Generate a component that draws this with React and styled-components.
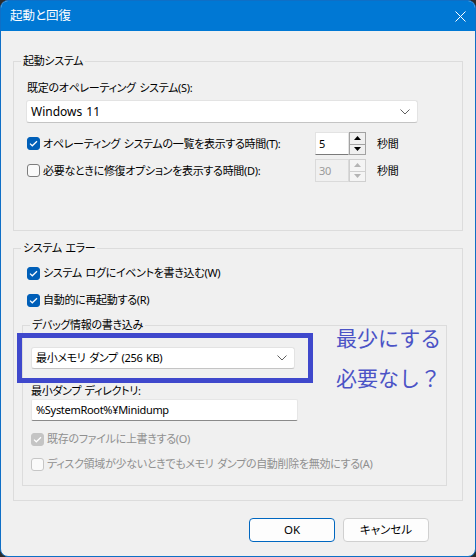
import styled, { createGlobalStyle } from 'styled-components';

const Global = createGlobalStyle`
    html, body {
        margin: 0;
        padding: 0;
        background: #2b2b2b;
    }
    body {
        font-family: "Noto Sans", "Noto Sans CJK JP", sans-serif;
        font-size: 11px;
        letter-spacing: -0.3px;
        word-spacing: 1px;
        font-feature-settings: "palt";
        color: #000;
    }`

const Window = styled.div`
    position: relative;
    width: 476px;
    height: 557px;
    box-sizing: border-box;
    border: 1px solid #0f6fc6;
    border-radius: 8px;
    overflow: hidden;
    background: #f0f0f0;
    display: flex;
    flex-direction: column;`

const TitleBar = styled.div`
    height: 30px;
    flex-shrink: 0;
    background: #0078d4;
    color: #fff;
    display: flex;
    align-items: center;
    justify-content: space-between;
    padding: 0 9px 0 9px;
    font-size: 12.5px;
    letter-spacing: 0;
    line-height: 16px;`

const Body = styled.div`
    flex: 1;
    padding: 22px 12px 0 12px;
    display: flex;
    flex-direction: column;`

const Group = styled.fieldset`
    margin: ${p => p.$margin || '0'};
    padding: 0;
    border: 1px solid #dcdcdc;
    box-sizing: border-box;
    min-width: 0;
    height: ${p => p.$height}px;
    width: ${p => p.$width ? `${p.$width}px` : 'auto'};`

const Legend = styled.legend`
    margin-left: 7px;
    padding: 0 2px;
    line-height: 16px;
    height: 16px;`

const Content = styled.div`
    padding: ${p => p.$pad};
    display: flex;
    flex-direction: column;`

const Label = styled.div`
    line-height: 16px;
    height: 16px;
    margin-top: ${p => p.$top || 0}px;
    white-space: nowrap;`

const SelectBox = styled.div`
    margin: ${p => p.$margin};
    width: ${p => p.$width}px;
    height: ${p => p.$height}px;
    box-sizing: border-box;
    background: #fff;
    border: 1px solid #e3e3e3;
    border-bottom-color: #c4c4c4;
    border-radius: 3px;
    display: flex;
    align-items: center;
    justify-content: space-between;
    padding: 0 7px 0 4px;
    line-height: 16px;`

const SelectText = styled.span`
    font-size: ${p => p.$size || 11}px;
    letter-spacing: ${p => p.$size ? '0' : '-0.3px'};`

const TextField = styled.div`
    margin-top: ${p => p.$top || 0}px;
    width: ${p => p.$width}px;
    height: 22px;
    box-sizing: border-box;
    background: #fff;
    border: 1px solid #e6e6e6;
    border-bottom-color: #8a8a8a;
    border-radius: 2px;
    display: flex;
    align-items: center;
    padding: 0 4px;
    line-height: 16px;`

const TimeRow = styled.div`
    margin-top: ${p => p.$top}px;
    height: 23px;
    display: grid;
    grid-template-columns: 288px 51px auto;
    align-items: center;`

const CheckRow = styled.label`
    margin-top: ${p => p.$top || 0}px;
    height: 16px;
    display: flex;
    align-items: center;
    gap: 3px;
    white-space: nowrap;
    line-height: 16px;
    color: ${p => p.$disabled ? '#8f8f8f' : '#000'};`

const Box = styled.span`
    width: 13px;
    height: 13px;
    box-sizing: border-box;
    border-radius: 3px;
    flex-shrink: 0;
    display: flex;
    align-items: center;
    justify-content: center;
    background: ${p => p.$checked ? (p.$disabled ? '#c4c4c4' : '#005fb8') : '#fafafa'};
    border: 1px solid ${p => p.$checked ? (p.$disabled ? '#c4c4c4' : '#005fb8') : (p.$disabled ? '#c6c6c6' : '#7d7d7d')};`

const Spin = styled.div`
    display: flex;
    height: 23px;`

const SpinField = styled.div`
    width: 34px;
    box-sizing: border-box;
    background: ${p => p.$disabled ? '#f0f0f0' : '#fff'};
    color: ${p => p.$disabled ? '#9a9a9a' : '#000'};
    border: 1px solid ${p => p.$disabled ? '#dadada' : '#e3e3e3'};
    border-bottom-color: ${p => p.$disabled ? '#dadada' : '#7a7a7a'};
    display: flex;
    align-items: center;
    padding-left: 3px;
    line-height: 16px;`

const SpinButtons = styled.div`
    width: 17px;
    box-sizing: border-box;
    display: grid;
    grid-template-rows: 1fr 1fr;
    border: 1px solid ${p => p.$disabled ? '#cfcfcf' : '#a2a2a2'};
    background: ${p => p.$disabled ? '#f4f4f4' : '#f0f0f0'};`

const SpinButton = styled.div`
    display: flex;
    align-items: center;
    justify-content: center;
    border-top: ${p => p.$lower ? `1px solid ${p.$disabled ? '#cfcfcf' : '#a2a2a2'}` : 'none'};`

const Unit = styled.span`
    margin-left: 11px;
    line-height: 16px;`

const Footer = styled.div`
    display: flex;
    justify-content: flex-end;
    gap: 8px;
    padding: 17px 34px 0 0;`

const Button = styled.button`
    width: 86px;
    height: 24px;
    box-sizing: border-box;
    border-radius: 4px;
    border: 1px solid ${p => p.$primary ? '#0067c0' : '#d0d0d0'};
    background: #fdfdfd;
    font: inherit;
    font-size: 11.5px;
    color: #000;
    padding: 0;
    line-height: 16px;`

const Highlight = styled.div`
    position: absolute;
    left: 16px;
    top: 332px;
    width: 296px;
    height: 50px;
    box-sizing: border-box;
    border: 5px solid #3f48cc;`

const Note = styled.div`
    position: absolute;
    left: 335px;
    top: 316px;
    font-family: "Noto Sans CJK JP", sans-serif;
    font-size: 21px;
    letter-spacing: 0;
    line-height: 40px;
    color: #4b53c6;
    font-feature-settings: normal;
    white-space: nowrap;`

function Chevron() {
    return (
        <svg width="10" height="6" viewBox="0 0 10 6">
            <path d="M0.5 0.5 L5 5 L9.5 0.5" fill="none" stroke="#606060" strokeWidth="1" />
        </svg>
    )
}

function Check({ checked, disabled }) {
    return (
        <Box $checked={checked} $disabled={disabled}>
            {checked ? (
                <svg width="9" height="7" viewBox="0 0 9 7">
                    <path d="M1 3.6 L3.3 5.8 L8 1.2" fill="none" stroke="#fff" strokeWidth="1.2" />
                </svg>
            ) : null}
        </Box>
    )
}

function Spinner({ value, disabled }) {
    const c = disabled ? '#b4b4b4' : '#000';
    return (
        <Spin>
            <SpinField $disabled={disabled}>{value}</SpinField>
            <SpinButtons $disabled={disabled}>
                <SpinButton>
                    <svg width="7" height="4" viewBox="0 0 7 4"><path d="M0 4 L3.5 0 L7 4 Z" fill={c} /></svg>
                </SpinButton>
                <SpinButton $lower $disabled={disabled}>
                    <svg width="7" height="4" viewBox="0 0 7 4"><path d="M0 0 L7 0 L3.5 4 Z" fill={c} /></svg>
                </SpinButton>
            </SpinButtons>
        </Spin>
    )
}

export default function App() {
    return (
        <>
            <Global />
            <Window>
                <TitleBar>
                    <span>起動と回復</span>
                    <svg width="11" height="11" viewBox="0 0 11 11">
                        <path d="M0.5 0.5 L10.5 10.5 M10.5 0.5 L0.5 10.5" stroke="#fff" strokeWidth="1" />
                    </svg>
                </TitleBar>
                <Body>
                    <Group $height={178}>
                        <Legend>起動システム</Legend>
                        <Content $pad="11px 13px 0 13px">
                            <Label>既定のオペレーティング システム(S):</Label>
                            <SelectBox $margin="4px 0 0 -1px" $width={392} $height={23}>
                                <SelectText $size={12}>Windows 11</SelectText>
                                <Chevron />
                            </SelectBox>
                            <TimeRow $top={9}>
                                <CheckRow>
                                    <Check checked />
                                    オペレーティング システムの一覧を表示する時間(T):
                                </CheckRow>
                                <Spinner value="5" />
                                <Unit>秒間</Unit>
                            </TimeRow>
                            <TimeRow $top={4}>
                                <CheckRow>
                                    <Check />
                                    必要なときに修復オプションを表示する時間(D):
                                </CheckRow>
                                <Spinner value="30" disabled />
                                <Unit>秒間</Unit>
                            </TimeRow>
                        </Content>
                    </Group>
                    <Group $height={261} $margin="9px 0 0 0">
                        <Legend>システム エラー</Legend>
                        <Content $pad="9px 13px 0 13px">
                            <CheckRow>
                                <Check checked />
                                システム ログにイベントを書き込む(W)
                            </CheckRow>
                            <CheckRow $top={11}>
                                <Check checked />
                                自動的に再起動する(R)
                            </CheckRow>
                            <Group $height={169} $width={425} $margin="9px 0 0 -5px">
                                <Legend>デバッグ情報の書き込み</Legend>
                                <Content $pad="14px 8px 0 8px">
                                    <SelectBox $margin="0" $width={264} $height={22}>
                                        <SelectText>最小メモリ ダンプ (256 KB)</SelectText>
                                        <Chevron />
                                    </SelectBox>
                                    <Label $top={14}>最小ダンプ ディレクトリ:</Label>
                                    <TextField $width={267}>%SystemRoot%¥Minidump</TextField>
                                    <CheckRow $top={10} $disabled>
                                        <Check checked disabled />
                                        既存のファイルに上書きする(O)
                                    </CheckRow>
                                    <CheckRow $top={9} $disabled>
                                        <Check disabled />
                                        ディスク領域が少ないときでもメモリ ダンプの自動削除を無効にする(A)
                                    </CheckRow>
                                </Content>
                            </Group>
                        </Content>
                    </Group>
                    <Footer>
                        <Button $primary>OK</Button>
                        <Button>キャンセル</Button>
                    </Footer>
                </Body>
                <Highlight />
                <Note>
                    最少にする<br />
                    必要なし？
                </Note>
            </Window>
        </>
    )
}
